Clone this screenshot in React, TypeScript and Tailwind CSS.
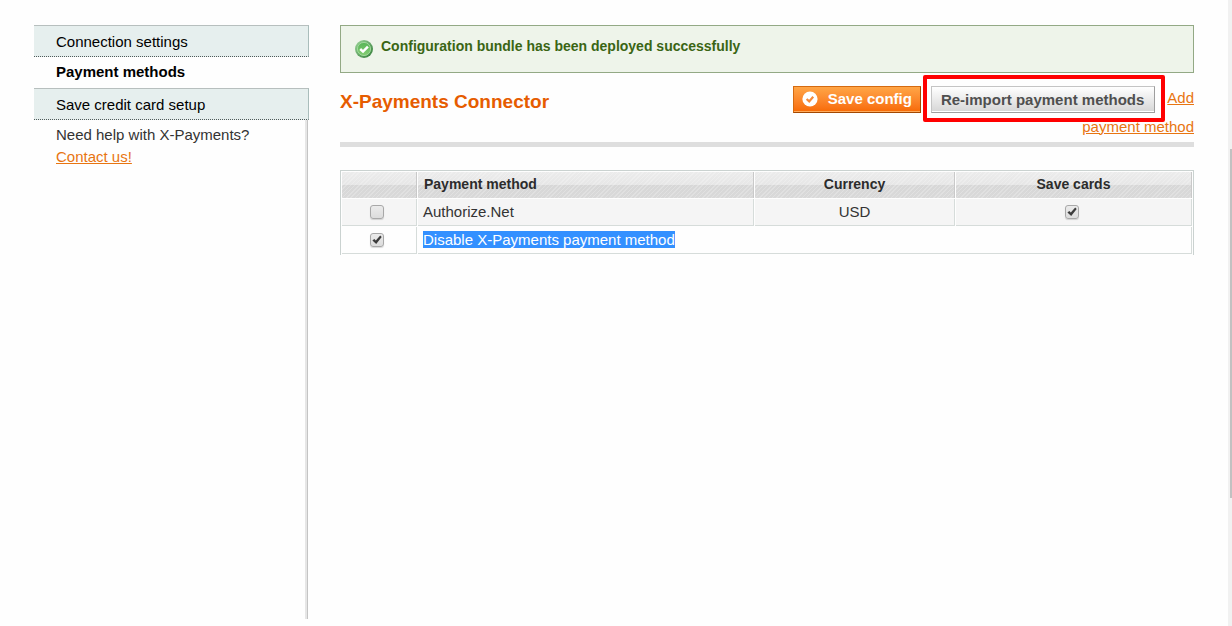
import React, { useState } from 'react';

function Tick({ label, checked: initial }: { label: string; checked?: boolean }) {
  const [checked, setChecked] = useState(Boolean(initial));
  return (
    <span className="grid h-[14px] w-[14px]">
      <input
        type="checkbox"
        aria-label={label}
        checked={checked}
        onChange={(e) => setChecked(e.target.checked)}
        className="col-start-1 row-start-1 h-[14px] w-[14px] appearance-none rounded-[3px] border border-[#a8a8a8] bg-linear-to-b from-[#ebebeb] to-[#dcdcdc] shadow-[0_1px_1px_rgba(0,0,0,0.15)]"
      />
      {checked && (
        <svg viewBox="0 0 14 14" className="pointer-events-none col-start-1 row-start-1 h-[14px] w-[14px]" aria-hidden="true">
          <path d="M2.4 7.6 4.3 5.9 5.8 7.5 10.2 2.6 11.7 4 6.2 10.9Z" fill="#3c3c3c" />
        </svg>
      )}
    </span>
  );
}

function SuccessIcon() {
  return (
    <svg viewBox="0 0 18 18" className="h-[18px] w-[18px] shrink-0" aria-hidden="true">
      <defs>
        <linearGradient id="rim" x1="0" y1="0" x2="1" y2="1">
          <stop offset="0" stopColor="#9ed79c" />
          <stop offset="1" stopColor="#2f7a35" />
        </linearGradient>
        <linearGradient id="face" x1="0" y1="0" x2="0" y2="1">
          <stop offset="0" stopColor="#58b558" />
          <stop offset="1" stopColor="#83cc72" />
        </linearGradient>
      </defs>
      <circle cx="9" cy="9" r="9" fill="url(#rim)" />
      <circle cx="9" cy="9" r="6.6" fill="url(#face)" stroke="#a5dba0" strokeWidth="0.9" />
      <path d="M5.2 9 8 11.6 12.9 6.6" fill="none" stroke="#fff" strokeWidth="2.5" />
    </svg>
  );
}

function SaveIcon() {
  return (
    <svg viewBox="0 0 16 16" className="h-4 w-4 shrink-0" aria-hidden="true">
      <circle cx="8" cy="8" r="7.6" fill="#fff" />
      <path d="M4.6 8 7.2 10.4 11.2 5.8" fill="none" stroke="#f58a3c" strokeWidth="2.2" />
    </svg>
  );
}

const tab =
  'block h-8 border-t border-r border-b border-t-[#b7bfbe] border-r-[#a9bdbb] border-b-[#4f5b5a] [border-bottom-style:dotted] bg-[#e6efee] pl-[22px] leading-[31px] text-black';

const head =
  'h-[26px] border-r border-[#c9c9c9] px-0 pt-0 pb-0.5 text-sm leading-[24px] font-bold text-[#2c2c2c] bg-[repeating-linear-gradient(135deg,rgba(255,255,255,0.22)_0px,rgba(255,255,255,0.22)_1px,transparent_1px,transparent_3px),linear-gradient(to_bottom,#ececec_0px,#e6e6e6_13px,#d7d7d7_13px,#d9d9d9_26px)]';

const cell = 'h-[27px] border-r border-b border-[#d6dcda] p-0 leading-[26px]';

export default function App() {
  return (
    <div className="flex min-h-screen bg-[#fefefe] font-['Liberation_Sans',Arial,sans-serif] text-[15px] text-[#333]">
      <div className="flex flex-1 gap-[31px] pt-[25px] pr-[34px] pb-[7px] pl-[34px]">
        <aside className="flex w-[275px] shrink-0 flex-col">
          <nav>
            <a href="#connection" className={tab}>Connection settings</a>
            <a href="#methods" aria-current="page" className="block h-[31px] pl-[22px] leading-[30px] font-bold text-black">
              Payment methods
            </a>
            <a href="#cards" className={tab}>Save credit card setup</a>
          </nav>
          <div className="mr-px flex-1 border-r border-[#c4c4c4]">
            <div className="h-full border-r-2 border-[#e6e6e6] pt-1 pl-[22px] leading-[22px]">
              <p>Need help with X-Payments?</p>
              <a href="#contact" className="text-[#e87511] underline">Contact us!</a>
            </div>
          </div>
        </aside>

        <main className="min-w-0 flex-1">
          <div role="status" className="flex h-12 items-start gap-2 border border-[#93a985] bg-[#eef4ea] px-[14px] pt-[14px]">
            <SuccessIcon />
            <p className="text-sm leading-[12px] font-bold text-[#3a6514]">Configuration bundle has been deployed successfully</p>
          </div>

          <header className="flex items-start justify-between border-b-[5px] border-[#dedede] pt-[11px] pb-[1px]">
            <h1 className="text-[19px] leading-[36px] font-bold text-[#e65c00]">X-Payments Connector</h1>
            <div className="w-[440px] text-right leading-[28px]">
              <button type="button" className="inline-flex h-[27px] items-center gap-[10px] border border-t-[#d56a10] border-r-[#a34700] border-b-[#a34700] border-l-[#d56a10] bg-linear-to-b from-[#ffa545] to-[#f76900] px-2 align-middle font-bold text-white shadow-[inset_0_-1px_0_#ffab5c]">
                <SaveIcon />
                Save config
              </button>
              <span className="relative mr-3 ml-[10px] inline-block align-middle leading-[0]">
                <button type="button" className="h-[27px] border border-t-[#c4c4c4] border-r-[#9e9e9e] border-b-[#9e9e9e] border-l-[#c4c4c4] bg-linear-to-b from-white to-[#d6d6d6] pr-[10px] pl-[9px] leading-[25px] font-bold text-[#4f4f4f] shadow-[inset_0_-1px_0_#fff]">
                  Re-import payment methods
                </button>
                <span className="pointer-events-none absolute -top-[11px] -right-[10px] -bottom-[9px] -left-2 z-10 rounded-[2px] border-4 border-[#f00]" />
              </span>
              <a href="#add" className="text-[#e87511] underline">Add payment method</a>
            </div>
          </header>

          <table className="mt-[23px] w-full table-fixed border-separate border-spacing-px border-x border-t border-[#cad2d0]">
            <colgroup>
              <col className="w-[75px]" />
              <col />
              <col className="w-[200px]" />
              <col className="w-[236px]" />
            </colgroup>
            <thead>
              <tr>
                <th className={head} aria-label="Use" />
                <th className={head + ' text-left'}><span className="pl-1.5">Payment method</span></th>
                <th className={head}>Currency</th>
                <th className={head}>Save cards</th>
              </tr>
            </thead>
            <tbody>
              <tr className="bg-[#f5f5f5]">
                <td className={cell}><div className="flex justify-center pr-1"><Tick label="Use Authorize.Net" /></div></td>
                <td className={cell}><span className="pl-[5px]">Authorize.Net</span></td>
                <td className={cell + ' text-center'}>USD</td>
                <td className={cell}><div className="flex justify-center pr-1"><Tick label="Save cards for Authorize.Net" checked /></div></td>
              </tr>
              <tr>
                <td className={cell}><div className="flex justify-center pr-1"><Tick label="Disable X-Payments payment method" checked /></div></td>
                <td colSpan={3} className={cell}>
                  <span className="ml-[5px] bg-[#3390ff] text-white">Disable X-Payments payment method</span>
                </td>
              </tr>
            </tbody>
          </table>
        </main>
      </div>
      <div className="flex w-1 shrink-0 justify-end bg-[#f1f1f1] pt-[149px]">
        <div className="h-[349px] w-0.5 bg-[#c1c1c1]" />
      </div>
    </div>
  );
}
